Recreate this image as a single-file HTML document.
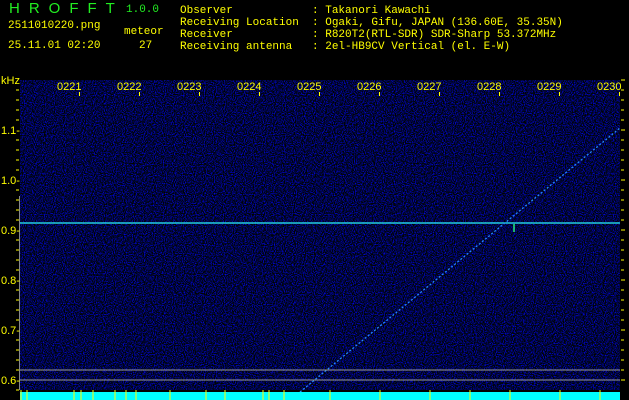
<!DOCTYPE html>
<html><head><style>
body{margin:0;background:#000;width:629px;height:400px;overflow:hidden;position:relative;font-family:"Liberation Mono",monospace;color:#ff0;}
.t{position:absolute;font-size:11px;line-height:12px;white-space:pre;}
</style></head><body>
<div class="t" style="left:9px;top:3px;color:#2e2;font-family:'Liberation Sans',sans-serif;font-size:15px;letter-spacing:9px">HROFFT</div>
<div class="t" style="left:126px;top:4px;color:#2e2;font-size:11px">1.0.0</div>
<div class="t" style="left:8px;top:20px">2511010220.png</div>
<div class="t" style="left:124px;top:26px">meteor</div>
<div class="t" style="left:8px;top:40px">25.11.01 02:20</div>
<div class="t" style="left:139px;top:40px">27</div>
<div class="t" style="left:180px;top:5px">Observer            : Takanori Kawachi
Receiving Location  : Ogaki, Gifu, JAPAN (136.60E, 35.35N)
Receiver            : R820T2(RTL-SDR) SDR-Sharp 53.372MHz
Receiving antenna   : 2el-HB9CV Vertical (el. E-W)</div>
<svg width="629" height="400" style="position:absolute;left:0;top:0">
<defs>
<filter id="n" x="0" y="0" width="100%" height="100%" color-interpolation-filters="sRGB">
<feTurbulence type="fractalNoise" baseFrequency="0.9" numOctaves="1" seed="3"/>
<feColorMatrix values="0 0 0 0 0  0 0 0 0 0.02  2.6 0 0 0 -1.05  0 0 0 0 1"/>
</filter>
</defs>
<rect x="20" y="80" width="600" height="310" filter="url(#n)"/>
<line x1="20" y1="223" x2="620" y2="223" stroke="#2cd" stroke-width="1.5"/>
<line x1="514" y1="224" x2="514" y2="232" stroke="#2e8" stroke-width="1.5"/>
<line x1="300" y1="392" x2="620" y2="128" stroke="#28f" stroke-width="1.3" stroke-dasharray="2 2"/>
<line x1="20" y1="370" x2="620" y2="370" stroke="#999"/>
<line x1="20" y1="380" x2="620" y2="380" stroke="#999"/>
<line x1="19.5" y1="196" x2="19.5" y2="390" stroke="#888"/>
<rect x="20" y="392" width="600" height="8" fill="#0ff"/>
<g stroke="#ff0" stroke-width="1">
<line x1="21" y1="390" x2="21" y2="400"/><line x1="27" y1="390" x2="27" y2="400"/><line x1="74" y1="390" x2="74" y2="400"/><line x1="81" y1="390" x2="81" y2="400"/><line x1="93" y1="390" x2="93" y2="400"/><line x1="115" y1="390" x2="115" y2="400"/><line x1="126" y1="390" x2="126" y2="400"/><line x1="136" y1="390" x2="136" y2="400"/><line x1="170" y1="390" x2="170" y2="400"/><line x1="206" y1="390" x2="206" y2="400"/><line x1="225" y1="390" x2="225" y2="400"/><line x1="263" y1="390" x2="263" y2="400"/><line x1="269" y1="390" x2="269" y2="400"/><line x1="284" y1="390" x2="284" y2="400"/><line x1="330" y1="390" x2="330" y2="400"/><line x1="380" y1="390" x2="380" y2="400"/><line x1="430" y1="390" x2="430" y2="400"/><line x1="470" y1="390" x2="470" y2="400"/><line x1="510" y1="390" x2="510" y2="400"/><line x1="560" y1="390" x2="560" y2="400"/><line x1="600" y1="390" x2="600" y2="400"/>
</g>
<g fill="#ff0" font-family="Liberation Sans,sans-serif" font-size="11">
<text x="1" y="84">kHz</text>
<text x="1" y="134">1.1-</text><text x="1" y="184">1.0-</text><text x="1" y="234">0.9-</text><text x="1" y="284">0.8-</text><text x="1" y="334">0.7-</text><text x="1" y="384">0.6-</text>
<text x="57" y="90">0221</text><text x="117" y="90">0222</text><text x="177" y="90">0223</text><text x="237" y="90">0224</text><text x="297" y="90">0225</text><text x="357" y="90">0226</text><text x="417" y="90">0227</text><text x="477" y="90">0228</text><text x="537" y="90">0229</text><text x="597" y="90">0230</text>
</g>
<g stroke="#ff0">
<path d="M16 90h3M16 100h3M16 110h3M16 120h3M16 140h3M16 150h3M16 160h3M16 170h3M16 190h3M16 200h3M16 210h3M16 220h3M16 240h3M16 250h3M16 260h3M16 270h3M16 290h3M16 300h3M16 310h3M16 320h3M16 340h3M16 350h3M16 360h3M16 370h3M16 390h3"/>
<path d="M621 80h4M621 90h3M621 100h3M621 110h3M621 120h3M621 130h4M621 140h3M621 150h3M621 160h3M621 170h3M621 180h4M621 190h3M621 200h3M621 210h3M621 220h3M621 230h4M621 240h3M621 250h3M621 260h3M621 270h3M621 280h4M621 290h3M621 300h3M621 310h3M621 320h3M621 330h4M621 340h3M621 350h3M621 360h3M621 370h3M621 380h4"/>
<path d="M79.5 92v4M139.5 92v4M199.5 92v4M259.5 92v4M319.5 92v4M379.5 92v4M439.5 92v4M499.5 92v4M559.5 92v4M619.5 92v4"/>
</g>
</svg>
</body></html>
